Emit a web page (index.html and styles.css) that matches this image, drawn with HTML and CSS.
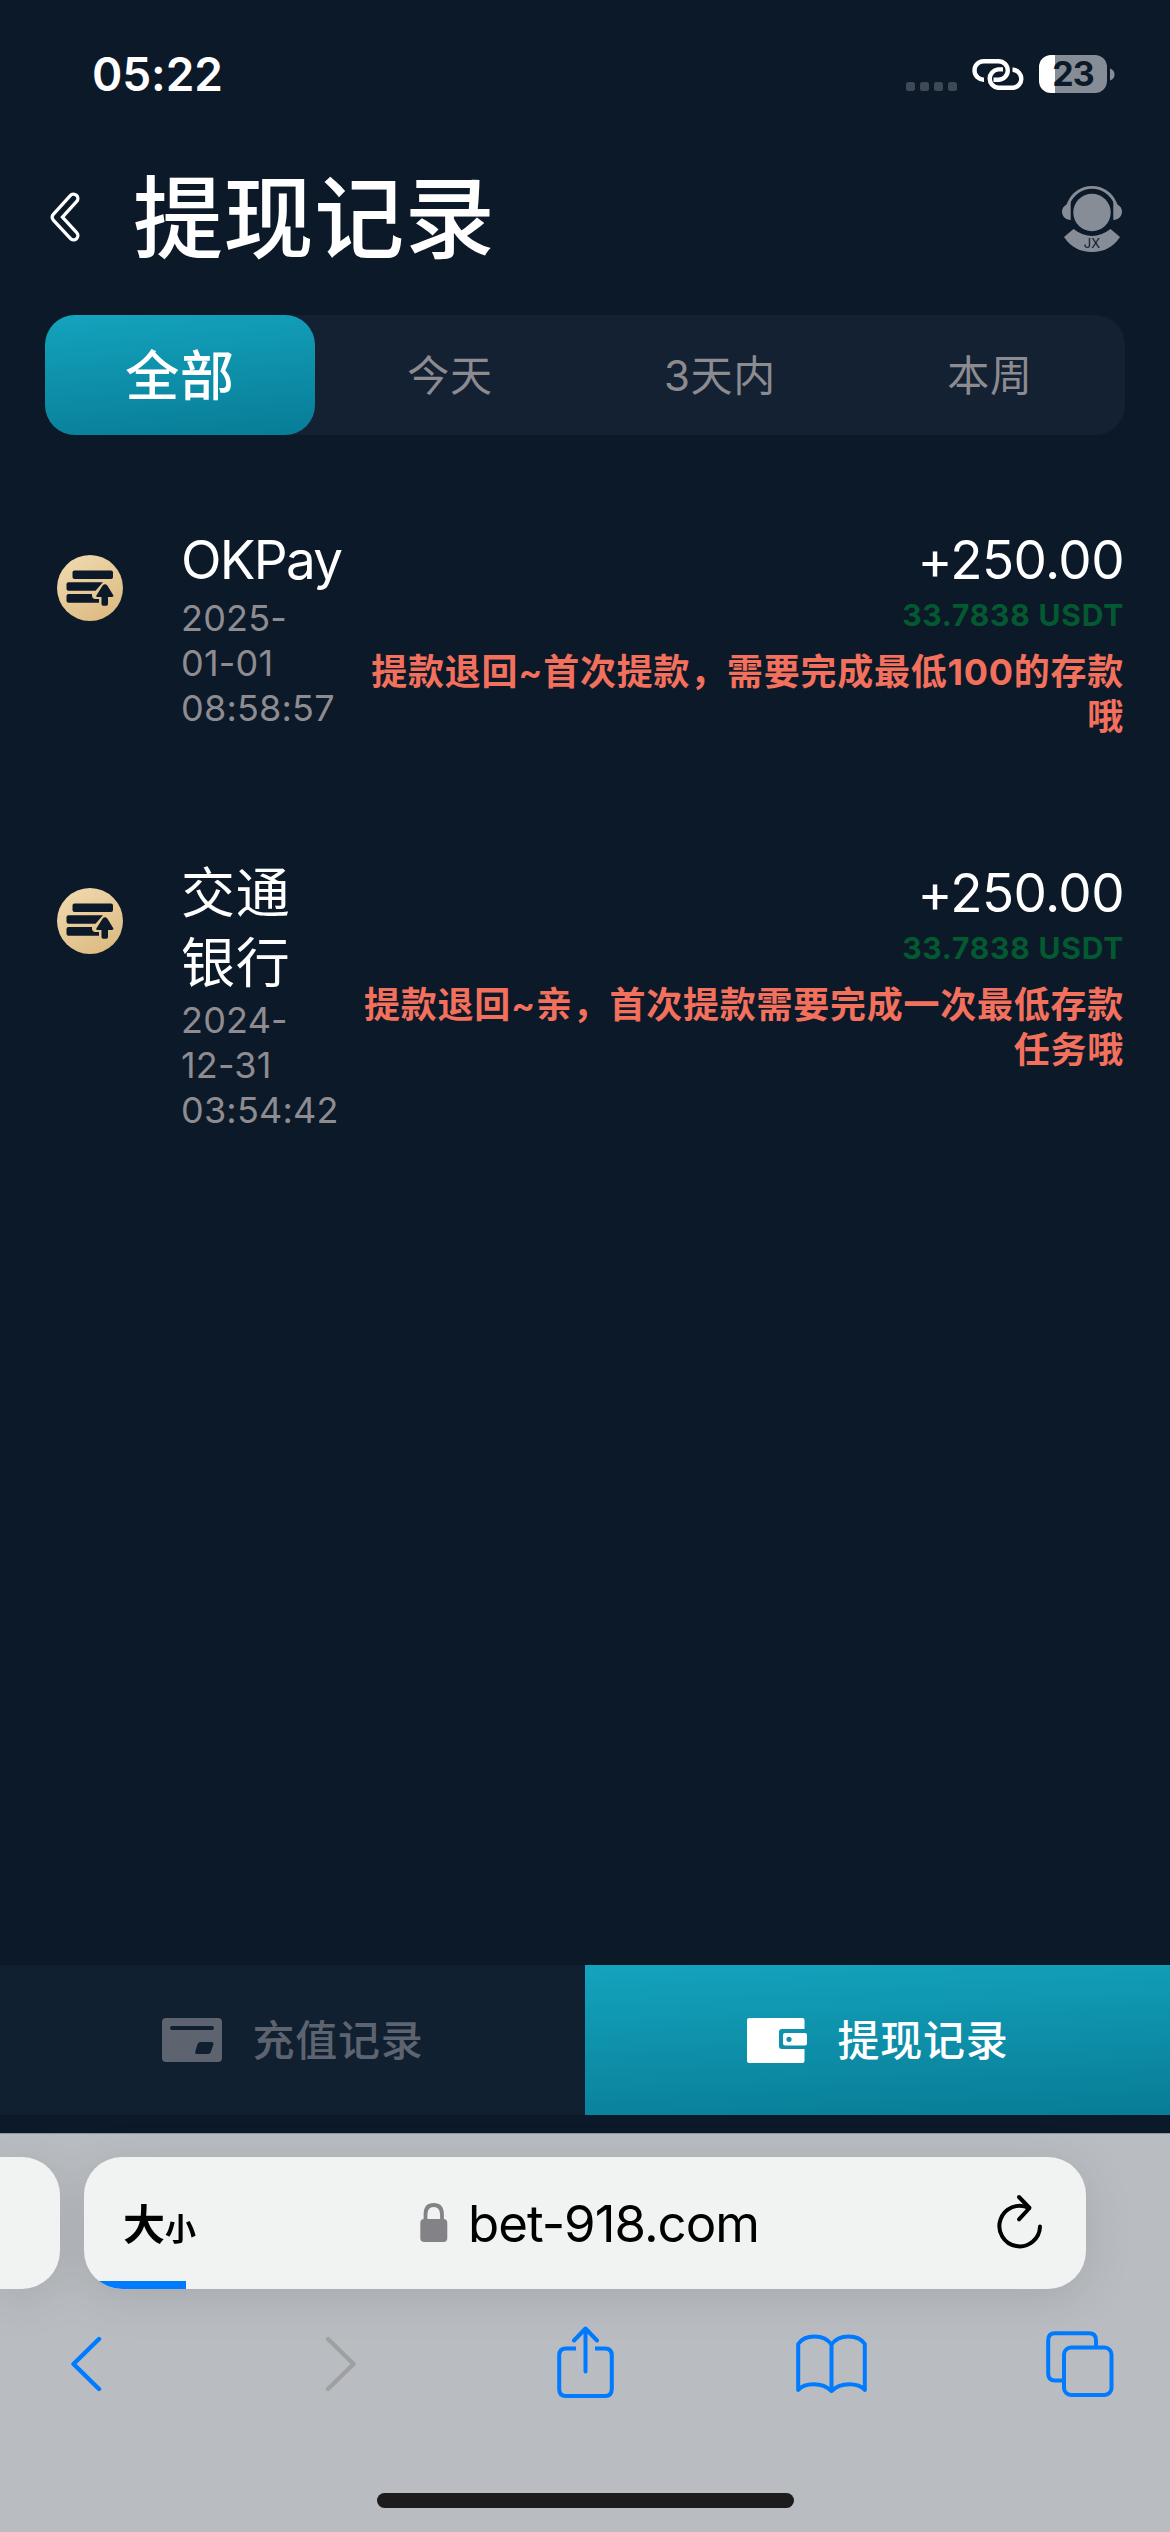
FILE: index.html
```html
<!DOCTYPE html>
<html lang="zh-CN">
<head>
<meta charset="utf-8">
<meta name="viewport" content="width=device-width">
<title>提现记录</title>
<link rel="stylesheet" href="styles.css">
</head>
<body>
<div class="phone">
  <header class="status">
    <span class="clock">05:22</span>
    <div class="signal"><i></i><i></i><i></i><i></i></div>
    <svg class="link" width="53" height="31" viewBox="0 0 53 31" fill="none" stroke="#fff" stroke-width="4.4">
      <path d="M12 20.700A9.250 9.250 0 0 1 11.500 2.200H26.500A9.250 9.250 0 0 1 26.500 20.700H21.500"/>
      <path d="M31 10.400H26A9.250 9.250 0 0 0 26 28.800H41.200A9.100 9.100 0 0 0 41.200 10.700H40.500"/>
    </svg>
    <div class="battery"><span>23</span></div>
    <svg class="nub" width="5" height="13" viewBox="0 0 5 13"><path d="M0 0.500Q4.500 2 4.500 6.500T0 12.500Z" fill="#868d97"/></svg>
  </header>

  <div class="titlebar">
    <svg class="back" width="32" height="52" viewBox="0 0 32 52" fill="none" stroke-linecap="round" stroke-linejoin="round">
      <path d="M24.500 7.500L7.500 26.200L24.500 44.500" stroke="#fff" stroke-width="12"/>
      <path d="M24.500 7.500L7.500 26.200L24.500 44.500" stroke="#0c1929" stroke-width="5.400"/>
    </svg>
    <h1>提现记录</h1>
    <svg class="service" width="60" height="66" viewBox="0 0 60 66" fill="#868d97">
      <circle cx="30" cy="26.500" r="18.700"/>
      <path d="M6.500 17.500C11 7 20 1.400 30 1.400S49 7 53.500 17.500" fill="none" stroke="#868d97" stroke-width="2.800"/>
      <path d="M4.500 18.500L6 16H8.700V34C3.500 34 0 30 0 25.500Q0 21 4.500 18.500Z"/>
      <path d="M55.500 18.500L54 16H51.300V34C56.500 34 60 30 60 25.500Q60 21 55.500 18.500Z"/>
      <path d="M2 51L11.500 43Q30 57 48.500 43L58 51Q48 66 30 66T2 51Z"/>
      <text x="30" y="61.500" text-anchor="middle" class="jx">JX</text>
    </svg>
  </div>

  <nav class="tabs">
    <span class="tab on">全部</span><span class="tab">今天</span><span class="tab">3天内</span><span class="tab">本周</span>
  </nav>

  <svg class="defs" width="0" height="0">
    <defs>
      <linearGradient id="gold" x1="0.200" y1="0" x2="0.800" y2="1"><stop offset="0" stop-color="#f0d9ae"/><stop offset="1" stop-color="#dcba80"/></linearGradient>
      <symbol id="withdraw" viewBox="0 0 66 66">
        <circle cx="33" cy="33" r="33" fill="url(#gold)"/>
        <g fill="#0c1929">
          <rect x="15.500" y="15.500" width="40.500" height="8.500" rx="2"/>
          <path d="M11.500 27.300H46L38.500 35.700H11.500Q9.500 35.700 9.500 33.700V29.300Q9.500 27.300 11.500 27.300Z"/>
          <path d="M11.500 39H35Q34.500 43.500 38 44H42V47.700H11.500Q9.500 47.700 9.500 45.700V41Q9.500 39 11.500 39Z"/>
          <path d="M45.500 30.700Q48 28 50.500 30.700L56.300 40.300Q57 42 55 42H51V49Q51 50.700 49.300 50.700H46.200Q44.500 50.700 44.500 49V42H40.500Q38.500 42 39.500 40.300Z"/>
        </g>
      </symbol>
    </defs>
  </svg>

  <main class="list">
    <article class="record">
      <svg class="coin" width="66" height="66"><use href="#withdraw"/></svg>
      <div class="left">
        <div class="name latin">OKPay</div>
        <div class="date">2025-<br>01-01<br>08:58:57</div>
      </div>
      <div class="right">
        <div class="amount">+250.00</div>
        <div class="usdt">33.7838 USDT</div>
        <div class="note">提款退回~首次提款，需要完成最低<b>100</b>的存款<br>哦</div>
      </div>
    </article>
    <article class="record">
      <svg class="coin" width="66" height="66"><use href="#withdraw"/></svg>
      <div class="left">
        <div class="name">交通<br>银行</div>
        <div class="date">2024-<br>12-31<br>03:54:42</div>
      </div>
      <div class="right">
        <div class="amount">+250.00</div>
        <div class="usdt">33.7838 USDT</div>
        <div class="note">提款退回~亲，首次提款需要完成一次最低存款<br>任务哦</div>
      </div>
    </article>
  </main>

  <nav class="switch">
    <div class="half">
      <svg width="60" height="44" viewBox="0 0 60 44"><rect width="60" height="44" rx="4" fill="#5d6470"/><rect x="8" y="8" width="44" height="4" rx="2" fill="#112031"/><path d="M38 24H49.500Q52 24 51.400 26.500L49 33.500Q48.300 36 46 36H35Q32.700 36 33.300 33.500L35.400 26.500Q36 24 38 24Z" fill="#112031"/></svg>
      <span>充值记录</span>
    </div>
    <div class="half on">
      <svg width="60" height="45" viewBox="0 0 60 45" fill="#fff"><path fill-rule="evenodd" d="M2.500 0H55.500Q57.500 0 57.500 2V11H35Q32 11 32 14V28Q32 31 35 31H57.500V43Q57.500 45 55.500 45H2Q0 45 0 43V2Q0 0 2.500 0Z"/><path fill-rule="evenodd" d="M38 15H58Q60 15 60 17V25.500Q60 27.500 58 27.500H38Q36 27.500 36 25.500V17Q36 15 38 15ZM42 18.700A2.600 2.600 0 1 0 42 23.900A2.600 2.600 0 1 0 42 18.700Z"/></svg>
      <span>提现记录</span>
    </div>
  </nav>

  <footer class="browser">
    <div class="bars">
      <div class="prev"></div>
      <div class="address">
        <span class="size"><b>大</b><small>小</small></span>
        <svg class="lock" width="28" height="40" viewBox="0 0 28 40"><path d="M5.500 18V11.500Q5.500 2 13.700 2T22 11.500V18" fill="none" stroke="#838387" stroke-width="3.800"/><rect x="0.300" y="16" width="27" height="23" rx="4" fill="#838387"/></svg>
        <span class="url">bet-918.com</span>
        <svg class="reload" width="46" height="56" viewBox="0 0 46 56" fill="none" stroke="#000" stroke-width="4" stroke-linecap="round" stroke-linejoin="round"><path d="M43 32.500A20.300 20.300 0 1 1 32 14"/><path d="M22 3L32.500 14L22 25.300" /></svg>
        <i class="progress"></i>
      </div>
    </div>
    <div class="tools">
      <svg width="72" height="56" viewBox="-17 0 72 56" fill="none" stroke="#007aff" stroke-width="4.400" stroke-linecap="round" stroke-linejoin="round"><path d="M29 3L3.500 28L29 53"/></svg>
      <svg width="72" height="56" viewBox="-24 0 72 56" fill="none" stroke="#9fa0a2" stroke-width="4.400" stroke-linecap="round" stroke-linejoin="round"><path d="M3 3L28.500 28L3 53"/></svg>
      <svg class="share" width="72" height="73" viewBox="-8 0 72 73" fill="none" stroke="#007aff" stroke-width="4"><path d="M19 22.500H9Q2.200 22.500 2.200 29.500V63Q2.200 70 9 70H48Q54.800 70 54.800 63V29.500Q54.800 22.500 48 22.500H38"/><path d="M28.500 45.500V3M17 14.500L28.500 2.500L40 14.500" stroke-linecap="round" stroke-linejoin="round"/></svg>
      <svg width="72" height="60" viewBox="0 0 72 60" fill="none" stroke="#007aff" stroke-width="4" stroke-linejoin="round"><path d="M35.500 10.500C28 0 9 0 2.200 10V56C9 48.500 26 48 35.500 57C45 48 62 48.500 68.800 56V10C62 0 43 0 35.500 10.500ZM35.500 10.500V57"/></svg>
      <svg width="72" height="66" viewBox="-2 0 72 66" fill="none" stroke="#007aff" stroke-width="4"><path d="M17 49.500H9Q2.200 49.500 2.200 42.500V9.200Q2.200 2.200 9 2.200H43Q50 2.200 50 9.200V16"/><rect x="18" y="16.500" width="47.500" height="47.500" rx="7"/></svg>
    </div>
    <div class="home"></div>
  </footer>
</div>
</body>
</html>
```
FILE: styles.css
```css
* { box-sizing: border-box; }
body { margin: 0; background: #0c1929; }
.phone {
  width: 1170px; height: 2532px;
  display: flex; flex-direction: column;
  background: #0c1929; color: #fff;
  font-family: Inter, "Noto Sans CJK SC", sans-serif;
  overflow: hidden;
}
svg { display: block; flex: none; }
.defs { height: 0; }

.status { height: 150px; display: flex; align-items: center; padding: 0 55px 2px 92px; }
.clock { font-size: 46px; font-weight: 600; line-height: 60px; width: 815px; letter-spacing: -0.1px; }
.signal { display: flex; gap: 5px; width: 66px; padding-top: 25px; }
.signal i { width: 9px; height: 9px; border-radius: 2.5px; background: #3f4956; }
.battery {
  margin-left: 14px; width: 68px; height: 38px; border-radius: 12px;
  background: linear-gradient(90deg, #fff 16px, #868d97 16px);
  color: #0c1929; font-size: 34px; font-weight: 700; line-height: 38px;
  text-align: center; letter-spacing: -1px;
}
.nub { margin-left: 3px; }

.titlebar { height: 165px; display: flex; align-items: flex-start; padding: 0 48px 0 49px; }
.back { margin-top: 41px; }
h1 { margin: 4px 0 0 52px; flex: 1; font-size: 90px; font-weight: 500; line-height: 130px; letter-spacing: 0.6px; }
.service { margin-top: 36px; }
.jx { font-size: 13px; fill: #0c1929; }

.tabs {
  height: 120px; margin: 0 45px; border-radius: 30px; background: #132132;
  display: grid; grid-template-columns: repeat(4, 1fr);
  color: #8c8b90; font-size: 42px; letter-spacing: 0.7px;
}
.tab { display: flex; align-items: center; justify-content: center; padding-bottom: 6px; }
.tab.on {
  border-radius: 30px; color: #fff; font-size: 54px; font-weight: 500;
  background: linear-gradient(175deg, #14a3bd, #087c96);
}

.list { flex: 1; padding: 91px 46px 0 57px; display: flex; flex-direction: column; gap: 119.5px; }
.record { display: grid; grid-template-columns: 66px 176px 1fr; align-items: start; }
.coin { margin-top: 29px; }
.left { margin-left: 59px; white-space: nowrap; }
.name { margin-left: -1px; font-size: 54px; line-height: 69.5px; letter-spacing: 0.7px; }
.name.latin { font-size: 53px; letter-spacing: -1.7px; }
.date { margin-left: -1px; font-size: 36px; line-height: 45px; color: #8e8c91; letter-spacing: 0.2px; }
.right { text-align: right; white-space: nowrap; }
.amount { font-size: 53px; line-height: 69.5px; letter-spacing: -0.6px; }
.usdt { font-size: 30px; line-height: 38px; font-weight: 700; color: #045a30; letter-spacing: 0.8px; }
.note { margin-top: 16px; font-size: 36px; line-height: 45px; font-weight: 600; color: #f2705c; letter-spacing: 0.75px; }
.note b { font-weight: 700; }

.switch { height: 150px; display: grid; grid-template-columns: 1fr 1fr; font-size: 42px; font-weight: 500; letter-spacing: 0.7px; }
.half { display: flex; align-items: center; justify-content: center; gap: 31px; background: #112031; color: #5d6470; }
.half span { padding-bottom: 6px; }
.half.on { color: #fff; background: linear-gradient(177deg, #14a3bd, #087c96); }

.browser { margin-top: 18px; height: 399px; border-top: 1px solid #90959f; background: #b9bdc2; color: #000; }
.bars { display: flex; gap: 24px; padding-top: 23px; filter: drop-shadow(0 8px 22px rgba(0, 0, 0, .1)); }
.prev { width: 60px; height: 132px; border-radius: 0 38px 38px 0; background: #f0f3f2; }
.address {
  position: relative; width: 1002px; height: 132px; border-radius: 38px; overflow: hidden;
  background: #f0f3f2; display: flex; align-items: center; padding-left: 39px;
}
.size { width: 297px; padding-top: 12px; line-height: 60px; white-space: nowrap; }
.size b { font-size: 42px; font-weight: 700; }
.size small { font-size: 31px; font-weight: 700; }
.url { margin-left: 20px; width: 529px; padding-top: 2px; font-size: 51px; line-height: 64px; letter-spacing: -1px; }
.reload { margin-bottom: 3px; }
.progress { position: absolute; left: 0; bottom: 0; width: 102px; height: 8px; background: #007aff; }
.tools { height: 150px; display: flex; align-items: center; justify-content: space-between; padding: 0 54px 0 53px; }
.share { margin-bottom: 4px; }
.home { width: 417px; height: 15px; border-radius: 8px; background: #1c1c1c; margin: 54px auto 0; }
```
